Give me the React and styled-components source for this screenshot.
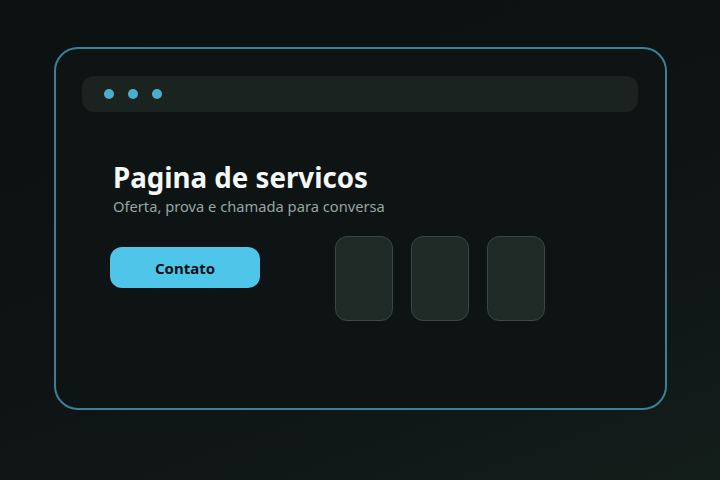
import React from 'react';
import styled, { createGlobalStyle } from 'styled-components';

const GlobalStyle = createGlobalStyle`
  html, body {
    margin: 0;
    padding: 0;
  }
  body {
    font-family: 'Noto Sans', 'Open Sans', sans-serif;
    background: #0c1112;
  }
`;

const Page = styled.div`
  width: 720px;
  height: 480px;
  box-sizing: border-box;
  padding: 47px 54px 0 54px;
  background: linear-gradient(160deg, #0b1011 0%, #0e1414 55%, #131d1a 100%);
  overflow: hidden;
`;

const Frame = styled.div`
  width: 613px;
  height: 363px;
  box-sizing: border-box;
  border: 2px solid #3a8096;
  border-radius: 24px;
  background: #0e1313;
  padding: 27px 27px 0 26px;
`;

const TopBar = styled.div`
  height: 36px;
  border-radius: 12px;
  background: #1b2321;
  display: flex;
  align-items: center;
  gap: 14px;
  padding-left: 22px;
`;

const Dot = styled.span`
  width: 10px;
  height: 10px;
  border-radius: 50%;
  background: #4aafcc;
`;

const Content = styled.div`
  padding: 47px 0 0 28px;
`;

const Title = styled.h1`
  margin: 0 0 0 3px;
  font-size: 27.7px;
  line-height: 36px;
  font-weight: 700;
  color: #f4f8f6;
`;

const Subtitle = styled.p`
  margin: 1px 0 0 3px;
  font-size: 14.7px;
  line-height: 20px;
  color: #95a6a2;
`;

const Row = styled.div`
  display: flex;
  align-items: flex-start;
  margin-top: 20px;
`;

const Button = styled.button`
  margin-top: 11px;
  width: 150px;
  height: 41px;
  border: none;
  border-radius: 12px;
  background: #4fc6e9;
  color: #071114;
  font-family: 'Noto Sans', 'Open Sans', sans-serif;
  font-size: 15px;
  font-weight: 700;
`;

const Cards = styled.div`
  display: flex;
  gap: 18px;
  margin-left: 75px;
`;

const Card = styled.div`
  width: 58px;
  height: 85px;
  box-sizing: border-box;
  border: 1px solid #3a4845;
  border-radius: 12px;
  background: #202b28;
`;

export default function App() {
  return (
    <>
      <GlobalStyle />
      <Page>
        <Frame>
          <TopBar>
            <Dot />
            <Dot />
            <Dot />
          </TopBar>
          <Content>
            <Title>Pagina de servicos</Title>
            <Subtitle>Oferta, prova e chamada para conversa</Subtitle>
            <Row>
              <Button>Contato</Button>
              <Cards>
                <Card />
                <Card />
                <Card />
              </Cards>
            </Row>
          </Content>
        </Frame>
      </Page>
    </>
  );
}
